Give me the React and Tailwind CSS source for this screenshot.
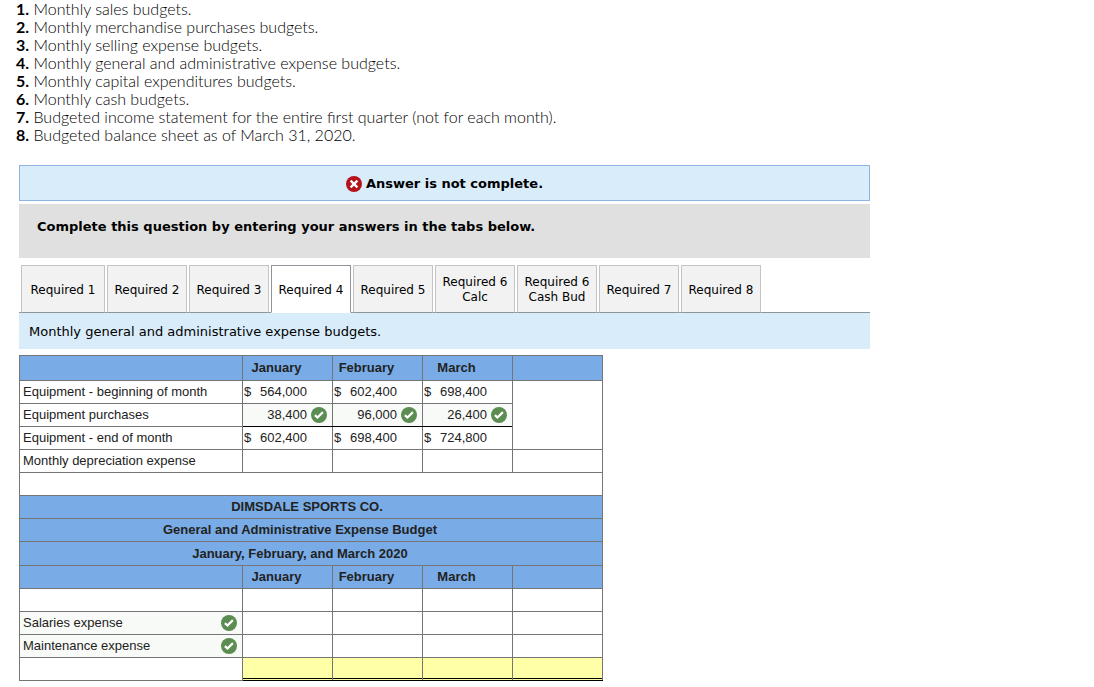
import { useState } from 'react'

const requirements = [
  'Monthly sales budgets.',
  'Monthly merchandise purchases budgets.',
  'Monthly selling expense budgets.',
  'Monthly general and administrative expense budgets.',
  'Monthly capital expenditures budgets.',
  'Monthly cash budgets.',
  'Budgeted income statement for the entire first quarter (not for each month).',
  'Budgeted balance sheet as of March 31, 2020.',
]

const tabs = [
  'Required 1',
  'Required 2',
  'Required 3',
  'Required 4',
  'Required 5',
  'Required 6 Calc',
  'Required 6 Cash Bud',
  'Required 7',
  'Required 8',
]

const months = ['January', 'February', 'March']

const cell = 'border border-[#757575] p-0'

const CheckIcon = () => (
  <svg viewBox="0 0 16 16" className="w-4 h-4 shrink-0" role="img" aria-label="Correct">
    <circle cx="8" cy="8" r="8" fill="#5b8c51" />
    <path d="M3.9 8.1l2.6 2.4 5.4-5.4" fill="none" stroke="#fff" strokeWidth="2.2" />
  </svg>
)

const CrossIcon = () => (
  <svg viewBox="0 0 16 16" className="w-4 h-4 shrink-0" aria-hidden="true">
    <circle cx="8" cy="8" r="8" fill="#b5121b" />
    <path d="M4.6 4.6l6.8 6.8M11.4 4.6l-6.8 6.8" fill="none" stroke="#fff" strokeWidth="2.2" />
  </svg>
)

const MonthHeader = () => (
  <>
    <td className={cell}></td>
    {months.map((month) => (
      <th key={month} scope="col" className={`${cell} pr-[22px] text-center font-bold`}>{month}</th>
    ))}
    <td className={cell}></td>
  </>
)

const Label = ({ children, correct }) => (
  <th scope="row" className={`${cell} text-left font-normal ${correct ? 'bg-[#f8faf7]' : ''}`}>
    <div className="flex items-center justify-between pl-[3px] pr-[5px]">
      <span>{children}</span>
      {correct && <CheckIcon />}
    </div>
  </th>
)

const Amount = ({ value, dollar, correct }) => (
  <td className={`${cell} ${correct ? 'bg-[#f8faf7] border-b-black' : ''}`}>
    <div className="flex items-center gap-1 pl-px pr-[5px]">
      <span>{dollar ? '$' : ''}</span>
      <span className="flex-1 text-right">{value}</span>
      <span className="w-4">{correct && <CheckIcon />}</span>
    </div>
  </td>
)

const EmptyCells = ({ count }) =>
  Array.from({ length: count }, (_, i) => <td key={i} className={cell}></td>)

const TitleRow = ({ children, className }) => (
  <tr className={`bg-[#79ace6] ${className}`}>
    <th colSpan={5} className={`${cell} text-center font-bold`}>{children}</th>
  </tr>
)

const BudgetTable = () => (
  <table className="mt-[6px] w-[584px] table-fixed border-collapse font-['Liberation_Sans',Arial,sans-serif] text-[13px] leading-4 text-[#222]">
    <colgroup>
      <col className="w-[223px]" />
      <col className="w-[90px]" />
      <col className="w-[90px]" />
      <col className="w-[90px]" />
      <col className="w-[90px]" />
    </colgroup>
    <tbody>
      <tr className="h-[25px] bg-[#79ace6]"><MonthHeader /></tr>
      <tr className="h-[23px]">
        <Label>Equipment - beginning of month</Label>
        <Amount dollar value="564,000" />
        <Amount dollar value="602,400" />
        <Amount dollar value="698,400" />
        <td rowSpan={3} className={cell}></td>
      </tr>
      <tr className="h-[23px]">
        <Label>Equipment purchases</Label>
        <Amount correct value="38,400" />
        <Amount correct value="96,000" />
        <Amount correct value="26,400" />
      </tr>
      <tr className="h-[23px]">
        <Label>Equipment - end of month</Label>
        <Amount dollar value="602,400" />
        <Amount dollar value="698,400" />
        <Amount dollar value="724,800" />
      </tr>
      <tr className="h-[23px]">
        <Label>Monthly depreciation expense</Label>
        <EmptyCells count={4} />
      </tr>
      <tr className="h-[23px]">
        <td colSpan={5} className={cell}></td>
      </tr>
      <TitleRow className="h-[23px]"><span className="pr-2">DIMSDALE SPORTS CO.</span></TitleRow>
      <TitleRow className="h-[23px]"><span className="pr-[22px]">General and Administrative Expense Budget</span></TitleRow>
      <TitleRow className="h-[24px]"><span className="pr-[22px]">January, February, and March 2020</span></TitleRow>
      <tr className="h-[23px] bg-[#79ace6]"><MonthHeader /></tr>
      <tr className="h-[23px]"><EmptyCells count={5} /></tr>
      <tr className="h-[23px]">
        <Label correct>Salaries expense</Label>
        <EmptyCells count={4} />
      </tr>
      <tr className="h-[23px]">
        <Label correct>Maintenance expense</Label>
        <EmptyCells count={4} />
      </tr>
      {/* totals, ruled off with a double line */}
      <tr className="h-[23px]">
        <td className={cell}></td>
        {[0, 1, 2, 3].map((i) => (
          <td key={i} className="border border-x-[#757575] border-y-black bg-[#ffffa8] p-0 pb-px">
            <div className="h-[21px] border-b border-black"></div>
          </td>
        ))}
      </tr>
    </tbody>
  </table>
)

const App = () => {
  const [active, setActive] = useState('Required 4')

  return (
    <main className="min-h-screen bg-white font-['DejaVu_Sans',Verdana,sans-serif] text-[13px] text-black">
      <ol className="pl-4 font-['Lato',sans-serif] text-base leading-[18px] font-light text-black">
        {requirements.map((text, i) => (
          <li key={text}><b className="font-bold">{i + 1}.</b> {text}</li>
        ))}
      </ol>

      <section className="mt-[21px] ml-[19px] max-w-[851px]">
        <div className="flex h-9 items-center justify-center gap-1 border border-[#8db4e2] bg-[#d9ecfa] pt-[2px] font-bold">
          <CrossIcon />
          Answer is not complete.
        </div>

        <p className="mt-[3px] bg-[#e0e0e0] px-[18px] pt-[15px] pb-[23px] leading-4 font-bold">
          Complete this question by entering your answers in the tabs below.
        </p>

        <div role="tablist" className="mt-[7px] flex gap-[2px] border-b border-[#8e9499] pl-[2px] text-xs leading-[15px]">
          {tabs.map((tab) => (
            <button
              key={tab}
              type="button"
              role="tab"
              aria-selected={tab === active}
              onClick={() => setActive(tab)}
              className={`h-12 w-20 -mb-px cursor-pointer border px-1 pt-[2px] first:w-[84px] ${
                tab === active
                  ? 'border-[#8e9499] border-b-white bg-white'
                  : 'border-[#c4c4c4] border-b-[#8e9499] bg-[#f2f2f2]'
              }`}
            >
              {tab}
            </button>
          ))}
        </div>

        <div role="tabpanel">
          <p className="bg-[#d9ecfa] px-[10px] pt-[11px] pb-[9px] leading-4">Monthly general and administrative expense budgets.</p>
          <BudgetTable />
        </div>
      </section>
    </main>
  )
}

export default App
